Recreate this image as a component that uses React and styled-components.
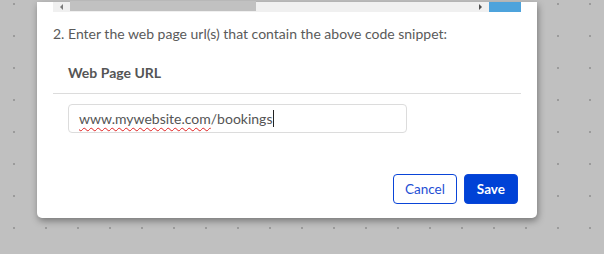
import React from "react";
import styled, { createGlobalStyle } from "styled-components";

const GlobalStyle = createGlobalStyle`
  html, body {
    margin: 0;
    padding: 0;
  }
  body {
    width: 604px;
    height: 254px;
    overflow: hidden;
    background-color: #c0c0c0;
    background-image: radial-gradient(circle, #9b9b9b 1px, transparent 1.4px);
    background-size: 32px 32px;
    background-position: -2px -12px;
    font-family: "Lato", "Open Sans", sans-serif;
  }
`;

const Modal = styled.div`
  margin: 2px 0 0 37px;
  width: 500px;
  box-sizing: border-box;
  padding: 0 16px 14px;
  background: #fff;
  border-radius: 0 0 5px 5px;
  box-shadow: 1px 3px 7px rgba(0, 0, 0, 0.38);
`;

const ScrollTrack = styled.div`
  display: flex;
  align-items: center;
  height: 10px;
  background: #f0f0f0;
`;

const Arrow = styled.div`
  width: 17px;
  height: 10px;
  display: flex;
  align-items: center;
  justify-content: center;
  &::before {
    content: "";
    border-top: 3px solid transparent;
    border-bottom: 3px solid transparent;
    ${(p) =>
      p.$dir === "left"
        ? "border-right: 3px solid #7a7a7a;"
        : "border-left: 3px solid #505050;"}
  }
`;

const Thumb = styled.div`
  width: 186px;
  height: 10px;
  background: #c1c1c1;
  margin-top: -2px;
`;

const Spacer = styled.div`
  flex: 1;
`;

const Corner = styled.div`
  width: 32px;
  height: 10px;
  background: #4ea3dc;
`;

const Instruction = styled.p`
  margin: 12px 0 0;
  font-size: 14px;
  line-height: 20px;
  color: #5a5a5a;
`;

const Section = styled.div`
  margin-top: 19px;
`;

const Heading = styled.div`
  padding: 0 15px 10px;
  font-size: 14px;
  font-weight: 700;
  line-height: 20px;
  color: #555;
  border-bottom: 1px solid #dcdcdc;
`;

const Field = styled.div`
  margin: 10px 0 0 15px;
  width: 339px;
  height: 29px;
  box-sizing: border-box;
  padding: 0 10px;
  display: flex;
  align-items: center;
  border: 1px solid #dcdcdc;
  border-radius: 4px;
  font-size: 14px;
  color: #555;
  white-space: nowrap;
`;

const Misspelled = styled.span`
  text-decoration: underline wavy #e02020;
  text-decoration-thickness: 1px;
  text-underline-offset: 3px;
`;

const Caret = styled.span`
  display: inline-block;
  width: 1px;
  height: 17px;
  background: #222;
  margin-left: 1px;
`;

const Actions = styled.div`
  display: flex;
  justify-content: flex-end;
  gap: 7px;
  margin-top: 41px;
  padding-right: 3px;
`;

const Button = styled.button`
  height: 30px;
  padding: 0 ${(p) => (p.$primary ? "12px" : "11px")};
  border-radius: 4px;
  border: 1px solid #0a45d8;
  background: ${(p) => (p.$primary ? "#0042d6" : "#fff")};
  color: ${(p) => (p.$primary ? "#fff" : "#1f4fd4")};
  font-family: "Lato", "Open Sans", sans-serif;
  font-size: 13.5px;
  font-weight: ${(p) => (p.$primary ? 700 : 400)};
  cursor: pointer;
`;

export default function App() {
  return (
    <>
      <GlobalStyle />
      <Modal>
        <ScrollTrack>
          <Arrow $dir="left" />
          <Thumb />
          <Spacer />
          <Arrow $dir="right" />
          <Corner />
        </ScrollTrack>
        <Instruction>
          2. Enter the web page url(s) that contain the above code snippet:
        </Instruction>
        <Section>
          <Heading>Web Page URL</Heading>
          <Field>
            <Misspelled>www.mywebsite.com</Misspelled>/bookings
            <Caret />
          </Field>
        </Section>
        <Actions>
          <Button>Cancel</Button>
          <Button $primary>Save</Button>
        </Actions>
      </Modal>
    </>
  );
}
